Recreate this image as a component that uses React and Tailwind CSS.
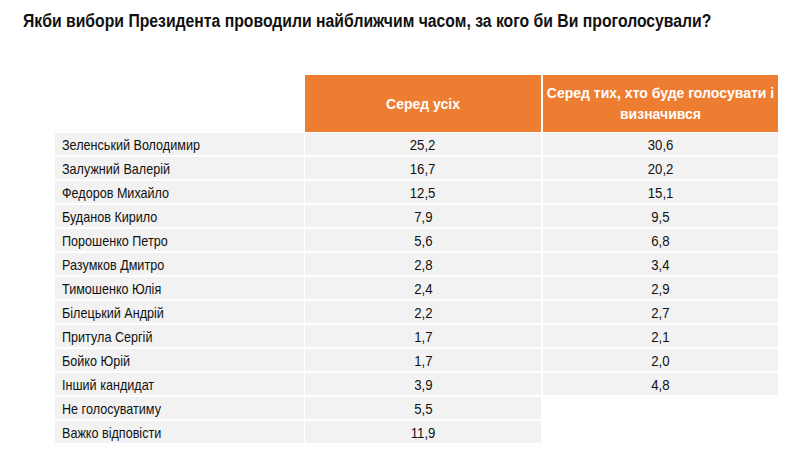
import React from "react";

const rows = [
  ["Зеленський Володимир", "25,2", "30,6"],
  ["Залужний Валерій", "16,7", "20,2"],
  ["Федоров Михайло", "12,5", "15,1"],
  ["Буданов Кирило", "7,9", "9,5"],
  ["Порошенко Петро", "5,6", "6,8"],
  ["Разумков Дмитро", "2,8", "3,4"],
  ["Тимошенко Юлія", "2,4", "2,9"],
  ["Білецький Андрій", "2,2", "2,7"],
  ["Притула Сергій", "1,7", "2,1"],
  ["Бойко Юрій", "1,7", "2,0"],
  ["Інший кандидат", "3,9", "4,8"],
  ["Не голосуватиму", "5,5", null],
  ["Важко відповісти", "11,9", null],
];

export default function App() {
  return (
    <div
      className="w-[800px] h-[461px] bg-white text-[#111] overflow-hidden"
      style={{ fontFamily: '"Liberation Sans", Arial, sans-serif' }}
    >
      <h1 className="pl-[23px] pt-[11px] text-[18px] font-bold leading-[20px] whitespace-nowrap">
        <span className="inline-block origin-left scale-x-[0.875]">
          Якби вибори Президента проводили найближчим часом, за кого би Ви проголосували?
        </span>
      </h1>
      <div className="ml-[55px] mt-[44px] w-[723px]">
        <div className="flex h-[57px] mb-[1px]">
          <div className="w-[249px]" />
          <div className="ml-[1px] w-[236px] bg-[#ED7D31] text-white font-bold text-[14px] flex items-center justify-center pt-[1px]">
            Серед усіх
          </div>
          <div className="ml-[2px] flex-1 bg-[#ED7D31] text-white font-bold text-[14px] leading-[21px] flex items-center justify-center text-center whitespace-nowrap">
            <span>
              Серед тих, хто буде голосувати і
              <br />
              визначився
            </span>
          </div>
        </div>
        <div className="flex flex-col gap-[2px]">
          {rows.map(([name, a, b]) => (
            <div key={name} className="flex h-[22px] text-[15px] leading-[22px]">
              <div className="w-[249px] bg-[#F2F2F2] pl-[7px] pt-[1px] whitespace-nowrap">
                <span className="inline-block origin-left scale-x-[0.84]">{name}</span>
              </div>
              <div className="ml-[1px] w-[236px] bg-[#F2F2F2] pt-[1px] flex justify-center">
                <span className="inline-block scale-x-[0.88]">{a}</span>
              </div>
              {b ? (
                <div className="ml-[2px] flex-1 bg-[#F2F2F2] pt-[1px] flex justify-center">
                  <span className="inline-block scale-x-[0.88]">{b}</span>
                </div>
              ) : (
                <div className="ml-[2px] flex-1" />
              )}
            </div>
          ))}
        </div>
      </div>
    </div>
  );
}
